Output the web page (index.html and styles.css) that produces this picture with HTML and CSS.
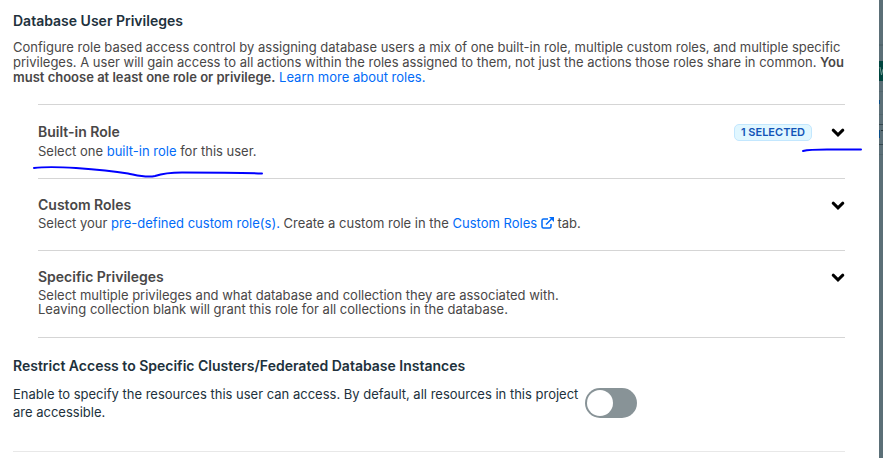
FILE: index.html
```html
<!DOCTYPE html>
<html lang="en">
<head>
<meta charset="utf-8">
<title>Database User Privileges</title>
<link rel="stylesheet" href="styles.css">
</head>
<body>
<main class="dialog">
  <section>
    <h2 class="heading">Database User Privileges</h2>
    <p class="intro">Configure role based access control by assigning database users a mix of one built-in role, multiple custom roles, and multiple specific<br>
    privileges. A user will gain access to all actions within the roles assigned to them, not just the actions those roles share in common. <strong>You<br>
    must choose at least one role or privilege.</strong> <a href="#">Learn more about roles.</a></p>
    <div class="roles">
      <div class="role">
        <div class="role-text">
          <h3 class="role-title">Built-in Role</h3>
          <p class="role-note">Select one <a href="#">built-in role</a> for this user.</p>
        </div>
        <span class="badge">1 SELECTED</span>
        <button class="toggle" type="button" aria-label="Expand Built-in Role">
          <svg width="14" height="10" viewBox="0 0 14 10"><path d="M2.2 2.2 7 6.8l4.8-4.6"/></svg>
        </button>
        <svg class="ink ink-note" width="234" height="16" viewBox="0 0 234 16"><path d="M2 5C14 3.500 28 4 44 5C66 6.500 84 8.500 96 10.500C106 12.500 114 15 123 13C132 10 138 9.500 150 9.500C176 9.500 204 9.500 230 10.500"/></svg>
        <svg class="ink ink-arrow" width="62" height="6" viewBox="0 0 62 6"><path d="M2 4C8 2.500 16 2.500 26 2.500L60 2.500"/></svg>
      </div>
      <div class="role">
        <div class="role-text">
          <h3 class="role-title">Custom Roles</h3>
          <p class="role-note">Select your <a href="#">pre-defined custom role(s).</a> Create a custom role in the <a href="#">Custom Roles <svg class="external" width="13" height="12" viewBox="0 0 13 12"><path d="M7 2H2.500Q1 2 1 3.500V9.500Q1 11 2.500 11H8.500Q10 11 10 9.500V7M5 7.500 10.500 2" fill="none" stroke="currentColor" stroke-width="1.500"/><path d="M8 0H13V5Z" fill="currentColor"/></svg></a> tab.</p>
        </div>
        <button class="toggle" type="button" aria-label="Expand Custom Roles">
          <svg width="14" height="10" viewBox="0 0 14 10"><path d="M2.2 2.2 7 6.8l4.8-4.6"/></svg>
        </button>
      </div>
      <div class="role">
        <div class="role-text">
          <h3 class="role-title">Specific Privileges</h3>
          <p class="role-note">Select multiple privileges and what database and collection they are associated with.<br>Leaving collection blank will grant this role for all collections in the database.</p>
        </div>
        <button class="toggle" type="button" aria-label="Expand Specific Privileges">
          <svg width="14" height="10" viewBox="0 0 14 10"><path d="M2.2 2.2 7 6.8l4.8-4.6"/></svg>
        </button>
      </div>
    </div>
  </section>
  <section class="restrict">
    <h2 class="heading">Restrict Access to Specific Clusters/Federated Database Instances</h2>
    <div class="restrict-row">
      <label class="restrict-label" for="restrict">Enable to specify the resources this user can access. By default, all resources in this project<br>are accessible.</label>
      <input class="switch" id="restrict" type="checkbox" role="switch">
    </div>
  </section>
</main>
<div class="backdrop">
  <svg width="4" height="160" viewBox="0 0 4 160">
    <path d="M0 44H4V46H0ZM0 91H4V92H0ZM0 114H4V115H0ZM0 154H4V155H0Z" fill="#52666d"/>
    <path d="M0 61H4V81H0Z" fill="#00453f"/>
    <path d="M1 67 2.500 75 4 69" fill="none" stroke="#6f9690"/>
    <path d="M0 100H1V104H0ZM0 130H1V138H0Z" fill="#084d87"/>
    <path d="M0 124H4V125H0ZM0 144H4V145H0Z" fill="#35474e"/>
    <path d="M2 130H4V131H2Z" fill="#23343a"/>
  </svg>
</div>
</body>
</html>
```
FILE: styles.css
```css
* { box-sizing: border-box; }
body {
  margin: 0;
  display: flex;
  min-height: 100vh;
  background: #fff;
  color: #494747;
  font: 13px/15px Inter, "Open Sans", sans-serif;
}
h2, h3, p { margin: 0; }
a { color: #016bf8; text-decoration: none; }
.dialog { flex: 1; min-width: 0; padding: 12px 34px 0 13px; }
.backdrop { width: 4px; background: #5b6f77; overflow: hidden; }
.backdrop svg { display: block; }
.heading {
  color: #21313c;
  font-size: 14px;
  line-height: 18px;
  font-weight: 600;
}
.intro { margin-top: 10px; white-space: nowrap; }
.intro strong { font-weight: 600; }
.roles { margin: 19px 0 0 25px; border-top: 1px solid #d5d5d5; }
.role {
  position: relative;
  display: flex;
  align-items: flex-start;
  padding: 17px 0 20px;
  border-bottom: 1px solid #d5d5d5;
}
.role-text { flex: 1; }
.role-title { font-size: 14px; line-height: 18px; font-weight: 600; }
.role-note { margin-top: 2px; line-height: 14px; }
.role:first-child { padding: 18px 0; }
.role:first-child .role-note { margin-top: 1px; line-height: 18px; }
.role:last-child { padding-bottom: 21px; }
.badge {
  margin: 1px 19px 0 0;
  padding: 0 6px;
  border: 1px solid #c3e7fe;
  border-radius: 5px;
  background: #e1f7ff;
  color: #1254b7;
  font-size: 11px;
  line-height: 15px;
  font-weight: 600;
}
.toggle {
  display: flex;
  margin-top: 5px;
  padding: 0;
  border: 0;
  background: none;
}
.toggle path {
  fill: none;
  stroke: #000;
  stroke-width: 3;
  stroke-linecap: round;
}
.external { vertical-align: -1px; }
.ink { position: absolute; }
.ink path { fill: none; stroke: #00f; stroke-width: 2; stroke-linecap: round; }
.ink-note { left: -6px; bottom: -1px; }
.ink-arrow { right: -18px; bottom: 25px; }
.restrict { padding-bottom: 30px; border-bottom: 1px solid #e8e8e8; }
.restrict .heading { margin-top: 19px; }
.restrict-row {
  display: flex;
  align-items: center;
  gap: 7px;
  margin-top: 10px;
  color: #21313c;
}
.restrict-label { line-height: 18px; white-space: nowrap; }
.switch {
  appearance: none;
  width: 52px;
  height: 30px;
  margin: 0;
  padding: 2px;
  border-radius: 15px;
  background: #889397;
}
.switch::before {
  content: "";
  display: block;
  width: 26px;
  height: 26px;
  border-radius: 50%;
  background: #fff;
}
.switch:checked::before { margin-left: auto; }
```
